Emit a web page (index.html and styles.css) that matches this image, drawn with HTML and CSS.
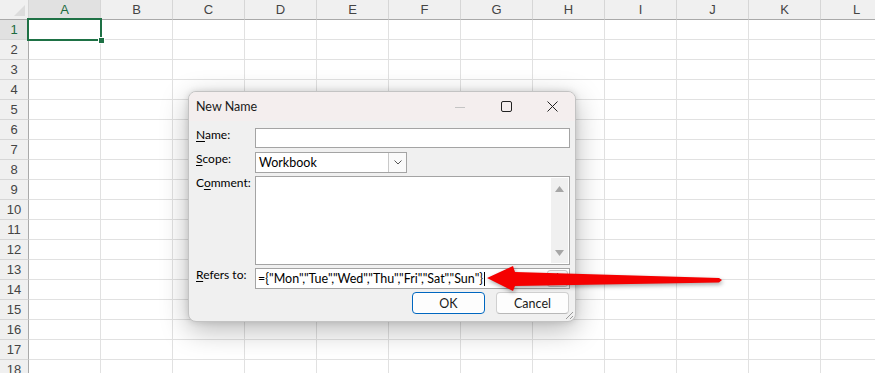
FILE: index.html
```html
<!DOCTYPE html>
<html lang="en">
<head>
    <meta charset="UTF-8">
    <meta name="viewport" content="width=device-width, initial-scale=1.0">
    <title>New Name</title>
    <link rel="stylesheet" href="styles.css">
</head>
<body>
    <div class="sheet" id="sheet"></div>

    <div class="dialog">
        <div class="title-bar">
            <span class="title">New Name</span>
            <div class="win-controls">
                <div class="win-btn">
                    <svg width="10" height="10" viewBox="0 0 10 10"><path d="M0 5.5h10" stroke="#c4c4c4" stroke-width="1"/></svg>
                </div>
                <div class="win-btn">
                    <svg width="11" height="11" viewBox="0 0 11 11"><rect x="0.5" y="0.5" width="10" height="10" rx="1.5" fill="none" stroke="#222" stroke-width="1"/></svg>
                </div>
                <div class="win-btn">
                    <svg width="11" height="11" viewBox="0 0 11 11"><path d="M0.5 0.5l10 10M10.5 0.5l-10 10" stroke="#222" stroke-width="1"/></svg>
                </div>
            </div>
        </div>

        <div class="form">
            <label class="label"><u>N</u>ame:</label>
            <div class="input name-input"></div>

            <label class="label"><u>S</u>cope:</label>
            <div class="select">
                <span class="select-value">Workbook</span>
                <span class="select-btn">
                    <svg width="8" height="5" viewBox="0 0 8 5"><path d="M0.5 0.5l3.5 3.5 3.5-3.5" fill="none" stroke="#555" stroke-width="1"/></svg>
                </span>
            </div>

            <label class="label">C<u>o</u>mment:</label>
            <div class="textarea">
                <div class="scrollbar">
                    <svg width="9" height="6" viewBox="0 0 9 6"><path d="M4.5 0L9 6H0z" fill="#a6a6a6"/></svg>
                    <svg width="9" height="6" viewBox="0 0 9 6"><path d="M0 0h9L4.5 6z" fill="#a6a6a6"/></svg>
                </div>
            </div>

            <label class="label"><u>R</u>efers to:</label>
            <div class="input refers-input">
                <span class="refers-text">={"Mon","Tue","Wed","Thu","Fri","Sat","Sun"}</span><span class="caret"></span>
                <span class="collapse-btn">
                    <svg width="7" height="6" viewBox="0 0 7 6"><path d="M3.5 0L7 4H0z" fill="#111"/></svg>
                </span>
            </div>

            <div class="buttons">
                <button class="btn btn-default">OK</button>
                <button class="btn">Cancel</button>
            </div>
        </div>

        <svg class="grip" width="9" height="9" viewBox="0 0 9 9">
            <path d="M8 1L1 8M8 5L5 8" stroke="#9a9a9a" stroke-width="1"/>
        </svg>
    </div>

    <svg class="arrow" width="250" height="40" viewBox="0 0 250 40">
        <polygon points="7,20 33,8 35,14 239,20 242,22 239,24.5 35,28 33,33" fill="#f50000"/>
    </svg>

    <script>
        const sheet = document.getElementById('sheet');
        const columns = ['A', 'B', 'C', 'D', 'E', 'F', 'G', 'H', 'I', 'J', 'K', 'L'];
        const rowCount = 18;

        function addCell(className, text) {
            const div = document.createElement('div');
            div.className = className;
            if (text) div.textContent = text;
            sheet.appendChild(div);
            return div;
        }

        addCell('corner');
        columns.forEach((col, i) => {
            addCell(i === 0 ? 'col-head selected' : 'col-head', col);
        });

        for (let r = 1; r <= rowCount; r++) {
            addCell(r === 1 ? 'row-head selected' : 'row-head', String(r));
            columns.forEach((col, i) => {
                addCell(r === 1 && i === 0 ? 'cell active' : 'cell');
            });
        }
    </script>
</body>
</html>
```

FILE: styles.css
```css
body {
    margin: 0;
    width: 875px;
    height: 373px;
    overflow: hidden;
    position: relative;
    background-color: #fff;
    font-family: "Liberation Sans", Arial, sans-serif;
}

/* spreadsheet */
.sheet {
    display: grid;
    grid-template-columns: 29px repeat(12, 72px);
    grid-auto-rows: 20px;
}
.sheet > div {
    box-sizing: border-box;
}
.corner {
    background-color: #f0f0f0;
    border-right: 1px solid #d4d4d4;
    border-bottom: 1px solid #a9a9a9;
    position: relative;
}
.corner::after {
    content: '';
    position: absolute;
    right: 3px;
    bottom: 3px;
    width: 0;
    height: 0;
    border-left: 11px solid transparent;
    border-bottom: 11px solid #dcdcdc;
}
.col-head {
    background-color: #f0f0f0;
    border-right: 1px solid #d6d6d6;
    border-bottom: 1px solid #a9a9a9;
    text-align: center;
    font-size: 13px;
    line-height: 19px;
    color: #444;
}
.row-head {
    background-color: #f0f0f0;
    border-right: 1px solid #a9a9a9;
    border-bottom: 1px solid #d6d6d6;
    text-align: center;
    font-size: 13px;
    line-height: 19px;
    color: #444;
}
.col-head.selected,
.row-head.selected {
    background-color: #e1e1e1;
    color: #1d6b40;
}
.cell {
    border-right: 1px solid #e1e1e1;
    border-bottom: 1px solid #e1e1e1;
}
.cell.active {
    position: relative;
}
.cell.active::after {
    content: '';
    position: absolute;
    left: -2px;
    top: -2px;
    width: 75px;
    height: 23px;
    box-sizing: border-box;
    border: 2px solid #1e7145;
}
.cell.active::before {
    content: '';
    position: absolute;
    left: 69px;
    top: 17px;
    width: 5px;
    height: 5px;
    background-color: #1e7145;
    border: 1px solid #fff;
    z-index: 1;
}

/* dialog */
.dialog {
    position: absolute;
    left: 188px;
    top: 91px;
    width: 388px;
    height: 231px;
    box-sizing: border-box;
    border: 1px solid #c3c3c3;
    border-radius: 8px;
    background-color: #f0f0f0;
    box-shadow: 0 8px 28px rgba(0, 0, 0, 0.28), 0 0 6px rgba(0, 0, 0, 0.12);
    overflow: hidden;
    font-family: Lato, "Open Sans", sans-serif;
    font-size: 12px;
    color: #000;
}
.title-bar {
    height: 29px;
    display: flex;
    align-items: center;
    justify-content: space-between;
    padding-left: 7px;
    background-color: #f4eeee;
}
.title {
    font-size: 12.5px;
    color: #1a1a1a;
}
.win-controls {
    display: flex;
    height: 100%;
}
.win-btn {
    width: 46px;
    display: flex;
    align-items: center;
    justify-content: center;
}
.form {
    display: grid;
    grid-template-columns: 59px 1fr;
    padding: 7px 5px 0 7px;
}
.label {
    font-size: 12px;
    line-height: 16px;
    margin-top: -1px;
    align-self: start;
}
.label u {
    text-underline-offset: 2px;
}
.input,
.select,
.textarea {
    box-sizing: border-box;
    background-color: #fff;
    border: 1px solid #a4a4a4;
}
.name-input {
    height: 20px;
}
.select {
    width: 152px;
    height: 21px;
    margin-top: 4px;
    display: flex;
    align-items: center;
    justify-content: space-between;
    padding-left: 3px;
    font-size: 12.5px;
}
.select + .label,
.textarea + .label {
    margin-top: 2px;
}
.label:nth-of-type(2) {
    margin-top: 3px;
}
.select-btn {
    width: 18px;
    height: 19px;
    box-sizing: border-box;
    border-left: 1px solid #c9c9c9;
    background-color: #fafafa;
    display: flex;
    align-items: center;
    justify-content: center;
}
.textarea {
    height: 89px;
    margin-top: 3px;
    display: flex;
    justify-content: flex-end;
    padding: 1px;
}
.scrollbar {
    width: 17px;
    background-color: #f0f0f0;
    display: flex;
    flex-direction: column;
    justify-content: space-between;
    align-items: center;
    padding: 8px 0 7px;
}
.refers-input {
    height: 21px;
    margin-top: 3px;
    display: flex;
    align-items: center;
    padding-left: 2px;
    position: relative;
}
.refers-text {
    white-space: nowrap;
    font-size: 12.5px;
}
.caret {
    width: 1px;
    height: 14px;
    margin-left: 1px;
    background-color: #000;
}
.collapse-btn {
    margin-left: auto;
    margin-right: 1px;
    width: 21px;
    height: 17px;
    box-sizing: border-box;
    border: 1px solid #c8c8c8;
    border-radius: 3px;
    background-color: #f7f7f7;
    display: flex;
    align-items: flex-start;
    justify-content: center;
    padding-top: 2px;
}
.buttons {
    grid-column: 1 / 3;
    display: flex;
    justify-content: flex-end;
    gap: 11px;
    margin-top: 3px;
    padding-right: 1px;
}
.btn {
    width: 73px;
    height: 22px;
    box-sizing: border-box;
    border: 1px solid #d0d0d0;
    border-bottom-color: #b8b8b8;
    border-radius: 4px;
    background-color: #fdfdfd;
    font-family: Lato, "Open Sans", sans-serif;
    font-size: 12.5px;
    color: #1a1a1a;
    padding: 0;
}
.btn-default {
    border: 1px solid #0067c0;
    box-shadow: inset 0 0 0 1px #ffffff;
}
.grip {
    position: absolute;
    right: 1px;
    bottom: 1px;
}

/* annotation arrow */
.arrow {
    position: absolute;
    left: 480px;
    top: 258px;
    filter: drop-shadow(1px 2px 2px rgba(0, 0, 0, 0.35));
}
```
